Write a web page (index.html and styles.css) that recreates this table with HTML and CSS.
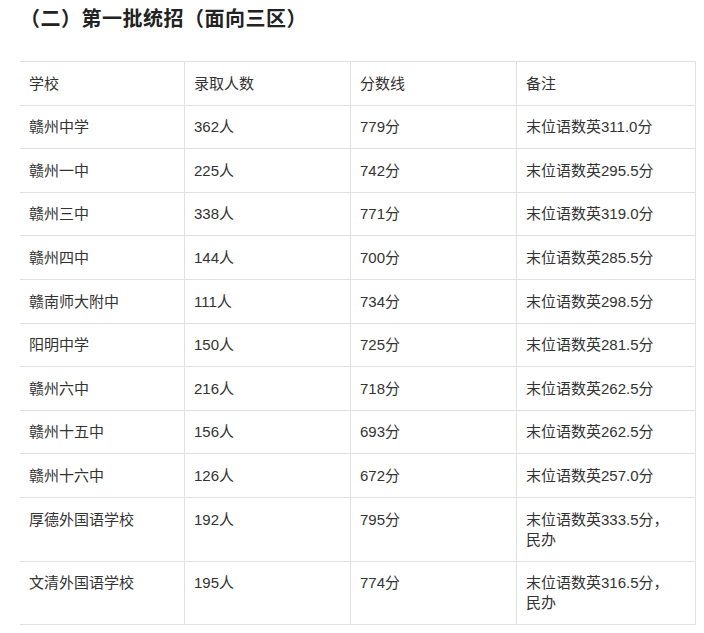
FILE: index.html
```html
<!DOCTYPE html>
<html lang="zh-CN">
<head>
<meta charset="utf-8">
<link rel="stylesheet" href="styles.css">
</head>
<body>
<div class="page">
  <h2 class="title">（二）第一批统招（面向三区）</h2>
  <table class="score-table">
    <colgroup>
      <col class="c1"><col class="c2"><col class="c3"><col class="c4">
    </colgroup>
    <tbody>
      <tr><td>学校</td><td>录取人数</td><td>分数线</td><td>备注</td></tr>
      <tr><td>赣州中学</td><td>362人</td><td>779分</td><td>末位语数英311.0分</td></tr>
      <tr><td>赣州一中</td><td>225人</td><td>742分</td><td>末位语数英295.5分</td></tr>
      <tr><td>赣州三中</td><td>338人</td><td>771分</td><td>末位语数英319.0分</td></tr>
      <tr><td>赣州四中</td><td>144人</td><td>700分</td><td>末位语数英285.5分</td></tr>
      <tr><td>赣南师大附中</td><td>111人</td><td>734分</td><td>末位语数英298.5分</td></tr>
      <tr><td>阳明中学</td><td>150人</td><td>725分</td><td>末位语数英281.5分</td></tr>
      <tr><td>赣州六中</td><td>216人</td><td>718分</td><td>末位语数英262.5分</td></tr>
      <tr><td>赣州十五中</td><td>156人</td><td>693分</td><td>末位语数英262.5分</td></tr>
      <tr><td>赣州十六中</td><td>126人</td><td>672分</td><td>末位语数英257.0分</td></tr>
      <tr><td>厚德外国语学校</td><td>192人</td><td>795分</td><td>末位语数英333.5分，<br>民办</td></tr>
      <tr><td>文清外国语学校</td><td>195人</td><td>774分</td><td>末位语数英316.5分，<br>民办</td></tr>
    </tbody>
  </table>
</div>
</body>
</html>
```

FILE: styles.css
```css
html, body {
  margin: 0;
  padding: 0;
  background: #ffffff;
}

.page {
  padding: 5px 8px 0 20px;
  font-family: "Liberation Sans", "Noto Sans CJK SC", sans-serif;
  color: #333333;
}

.title {
  margin: 0 0 28px 0;
  font-size: 20px;
  line-height: 28px;
  font-weight: bold;
  letter-spacing: 0.5px;
  color: #222222;
}

.score-table {
  width: 676px;
  table-layout: fixed;
  border-collapse: separate;
  border-spacing: 0;
  border-top: 1px solid #e0e0e0;
}

.c1 { width: 165px; }
.c2 { width: 166px; }
.c3 { width: 166px; }
.c4 { width: 179px; }

.score-table td {
  border-right: 1px solid #e0e0e0;
  border-bottom: 1px solid #e0e0e0;
  padding: 11.6px 9px 11px 9px;
  font-size: 15px;
  line-height: 20px;
  vertical-align: top;
  text-align: left;
  color: #333333;
}
```
